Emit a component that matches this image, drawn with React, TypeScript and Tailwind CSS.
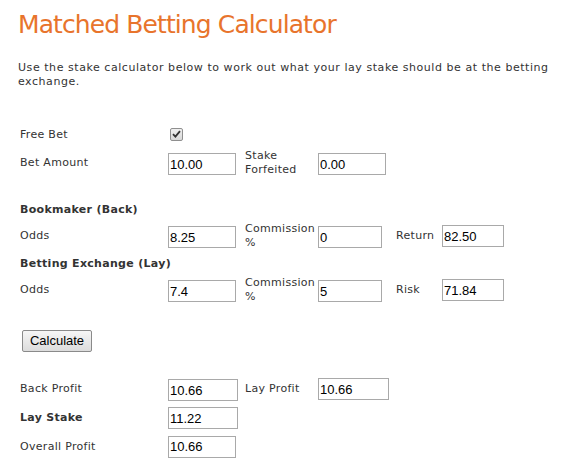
import React from "react";

const lbl = "font-['DejaVu_Sans',sans-serif] text-[11px] leading-[14px] text-[#333] tracking-[0.3px]";
const inp =
  "h-[22px] border border-[#a9a9a9] bg-white px-[1px] font-['Liberation_Sans',Arial,sans-serif] text-[13px] text-black outline-none";

function Input({ value, w }: { value: string; w: number }) {
  return (
    <input
      readOnly
      value={value}
      className={inp}
      style={{ width: w }}
    />
  );
}

export default function App() {
  return (
    <div className="w-[575px] h-[469px] bg-white overflow-hidden">
      <h1 className="pl-[18px] pt-[9px] font-['DejaVu_Sans',sans-serif] text-[25px] tracking-[-0.9px] leading-[32px] text-[#e8742c] font-normal">
        Matched Betting Calculator
      </h1>
      <p className="font-['DejaVu_Sans',sans-serif] text-[11px] leading-[14px] text-[#333] tracking-[0.55px] pl-[18px] mt-[20px] w-[560px]">
        Use the stake calculator below to work out what your lay stake should be at the betting exchange.
      </p>

      <div className="pl-[20px]">
        {/* Free bet */}
        <div className="flex items-center h-[22px] mt-[34px]">
          <div className={`${lbl} w-[148px] pt-[2px]`}>Free Bet</div>
          <div className="ml-[2px] w-[13px] h-[13px] border border-[#8f8f8f] rounded-[2px] bg-gradient-to-b from-[#f0f0f0] to-[#d8d8d8] flex items-center justify-center">
            <svg width="9" height="8" viewBox="0 0 9 8">
              <path d="M1 4.2 L3.4 6.6 L8 1.2" fill="none" stroke="#333" strokeWidth="1.8" />
            </svg>
          </div>
        </div>

        {/* Bet amount */}
        <div className="flex items-center h-[22px] mt-[7px]">
          <div className={`${lbl} w-[148px]`}>Bet Amount</div>
          <div className="w-[77px]"><Input value="10.00" w={68} /></div>
          <div className={`${lbl} w-[73px]`}>Stake<br />Forfeited</div>
          <div className="w-[78px]"><Input value="0.00" w={68} /></div>
        </div>

        {/* Bookmaker */}
        <div className="flex items-center h-[22px] mt-[24px]">
          <div className={`${lbl} font-bold pt-[1px]`}>Bookmaker (Back)</div>
        </div>
        <div className="flex items-center h-[22px] mt-[5px]">
          <div className={`${lbl} w-[148px]`}>Odds</div>
          <div className="w-[77px]"><Input value="8.25" w={68} /></div>
          <div className={`${lbl} w-[73px]`}>Commission<br />%</div>
          <div className="w-[78px]"><Input value="0" w={64} /></div>
          <div className={`${lbl} w-[46px]`}>Return</div>
          <Input value="82.50" w={62} />
        </div>

        {/* Exchange */}
        <div className="flex items-center h-[22px] mt-[5px]">
          <div className={`${lbl} font-bold pt-[1px]`}>Betting Exchange (Lay)</div>
        </div>
        <div className="flex items-center h-[22px] mt-[5px]">
          <div className={`${lbl} w-[148px]`}>Odds</div>
          <div className="w-[77px]"><Input value="7.4" w={68} /></div>
          <div className={`${lbl} w-[73px]`}>Commission<br />%</div>
          <div className="w-[78px]"><Input value="5" w={64} /></div>
          <div className={`${lbl} w-[46px]`}>Risk</div>
          <Input value="71.84" w={62} />
        </div>

        {/* Button */}
        <div className="mt-[29px] pl-[2px] flex">
          <button className="w-[70px] h-[22px] border border-[#8a8a8a] rounded-[2px] bg-gradient-to-b from-[#f6f6f6] to-[#dcdcdc] font-['Liberation_Sans',Arial,sans-serif] text-[13px] text-black">
            Calculate
          </button>
        </div>

        {/* Results */}
        <div className="flex items-center h-[22px] mt-[26px]">
          <div className={`${lbl} w-[148px]`}>Back Profit</div>
          <div className="w-[77px]"><Input value="10.66" w={70} /></div>
          <div className={`${lbl} w-[73px]`}>Lay Profit</div>
          <Input value="10.66" w={71} />
        </div>
        <div className="flex items-center h-[22px] mt-[7px]">
          <div className={`${lbl} w-[148px] font-bold`}>Lay Stake</div>
          <Input value="11.22" w={70} />
        </div>
        <div className="flex items-center h-[21px] mt-[7px]">
          <div className={`${lbl} w-[148px]`}>Overall Profit</div>
          <Input value="10.66" w={68} />
        </div>
      </div>
    </div>
  );
}
